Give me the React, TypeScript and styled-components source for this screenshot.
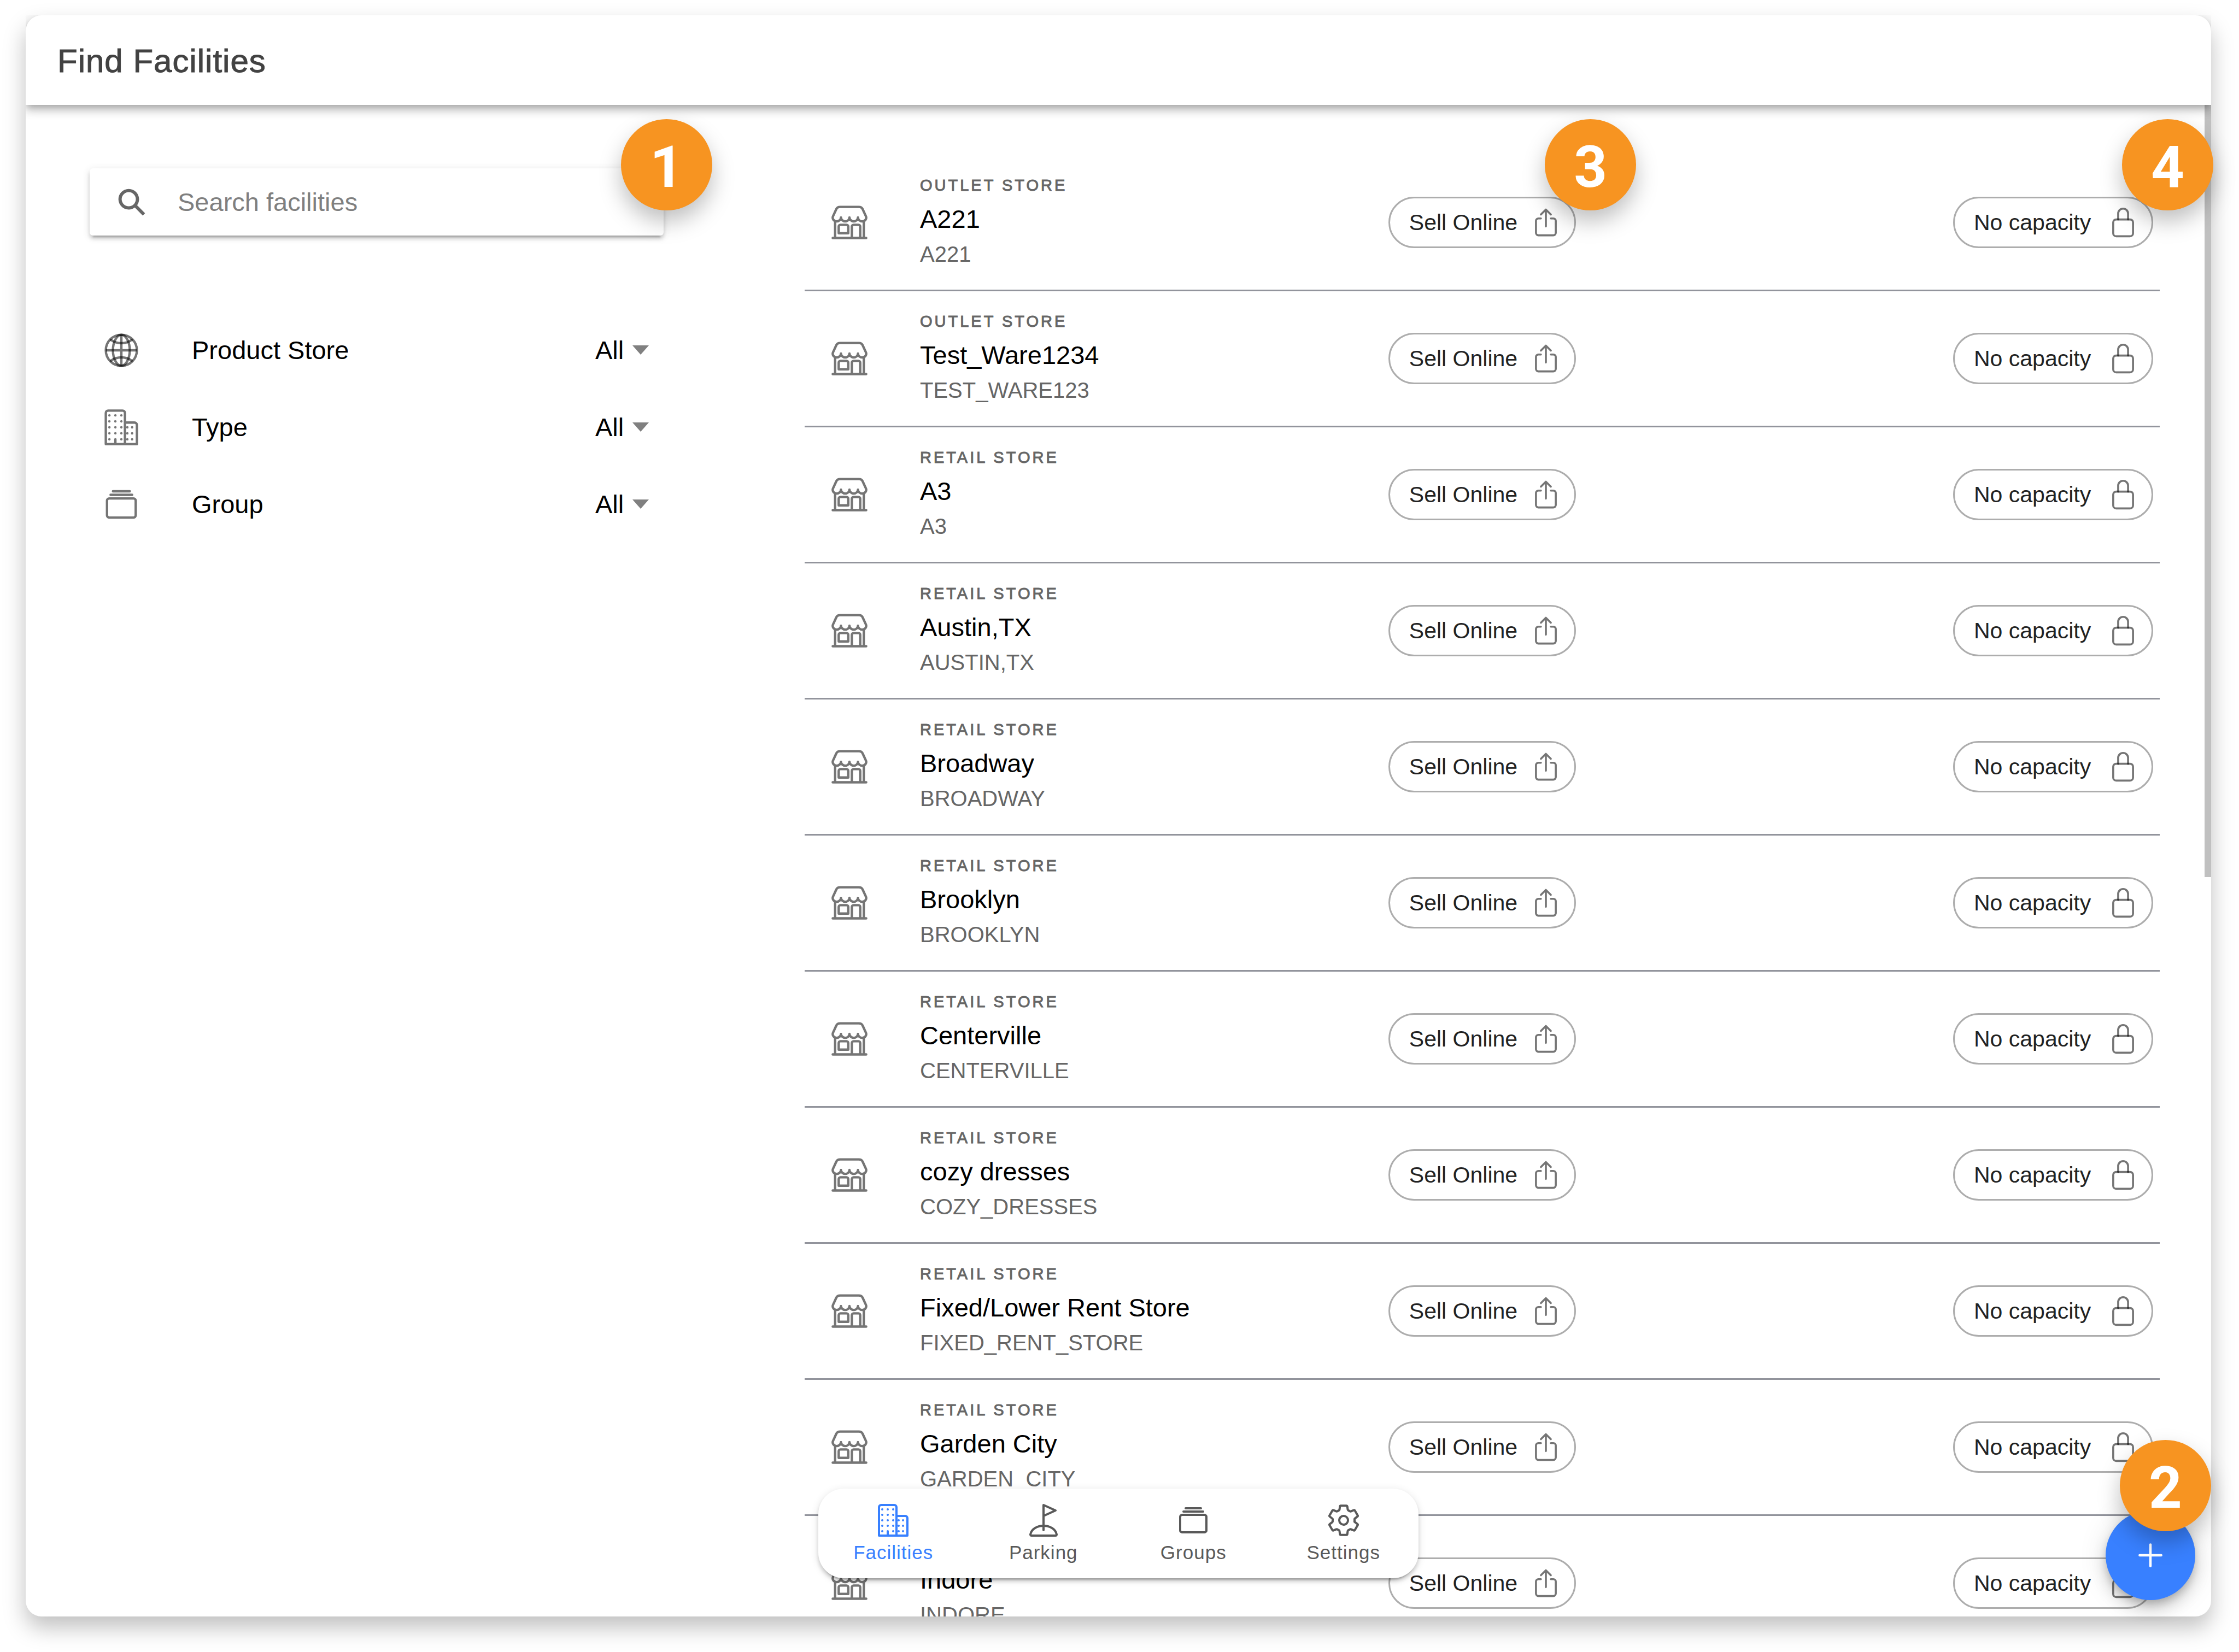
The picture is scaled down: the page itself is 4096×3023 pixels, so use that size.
import React from "react";
import styled, { createGlobalStyle } from "styled-components";
import {
  IoAdd,
  IoAlbumsOutline,
  IoBusinessOutline,
  IoGlobeOutline,
  IoGolfOutline,
  IoLockClosedOutline,
  IoSearchSharp,
  IoSettingsOutline,
  IoShareOutline,
  IoStorefrontOutline,
} from "react-icons/io5";

const colors = {
  primary: "#3880ff",
  accent: "#f79421",
  text: "#000",
  title: "#424242",
  muted: "#666",
  icon: "rgba(0, 0, 0, 0.54)",
  line: "#92949c",
};

const softShadow = "0 20px 40px rgba(0, 0, 0, 0.25)";
const raisedShadow =
  "0 6px 6px rgba(0, 0, 0, 0.14), 0 9px 3px -6px rgba(0, 0, 0, 0.2), 0 3px 15px rgba(0, 0, 0, 0.12)";

const GlobalStyle = createGlobalStyle`
  *, *::before, *::after { box-sizing: border-box; }
  body {
    margin: 0;
    background: #fff;
    color: ${colors.text};
    font-family: "Liberation Sans", Arial, Helvetica, sans-serif;
    font-size: 47px;
  }
  button, input, select { font: inherit; color: inherit; }
`;

const Page = styled.div`
  display: flex;
  height: 100vh;
  padding: 28px 51px 65px 47px;
`;

const Card = styled.div`
  position: relative;
  display: flex;
  flex: 1;
  flex-direction: column;
  min-width: 0;
  border-radius: 29px;
  background: #fff;
  box-shadow: ${softShadow};
`;

const Header = styled.header`
  position: relative;
  z-index: 1;
  display: flex;
  flex: none;
  align-items: center;
  height: 164px;
  padding: 4px 58px 0;
  border-radius: 29px 29px 0 0;
  background: #fff;
  box-shadow:
    0 6px 12px -3px rgba(0, 0, 0, 0.2),
    0 12px 15px rgba(0, 0, 0, 0.14),
    0 3px 29px rgba(0, 0, 0, 0.12);
  clip-path: inset(0 0 -60px 0);
`;

const Title = styled.h1`
  margin: 0;
  color: ${colors.title};
  font-size: 60px;
  font-weight: 400;
  line-height: 70px;
  letter-spacing: 1px;
  -webkit-text-stroke: 1px currentColor;
`;

const Content = styled.div`
  position: relative;
  display: flex;
  flex: 1;
  gap: 235px;
  min-height: 0;
  overflow: hidden;
  padding: 92px 94px 0;
  border-radius: 0 0 29px 29px;
`;

const Scrollbar = styled.div`
  position: absolute;
  top: 0;
  right: 0;
  width: 12px;
  height: 1413px;
  background: #c0c0c0;
`;

const Sidebar = styled.aside`
  flex: none;
  width: 1096px;
`;

const SearchBox = styled.label`
  position: relative;
  display: flex;
  align-items: center;
  gap: 54px;
  height: 123px;
  margin: 24px 23px 139px;
  padding: 0 47px;
  border-radius: 6px;
  background: #fff;
  box-shadow: ${raisedShadow};
`;

const SearchIcon = styled(IoSearchSharp)`
  flex: none;
  width: 60px;
  height: 60px;
  color: ${colors.muted};
`;

const SearchInput = styled.input`
  flex: 1;
  min-width: 0;
  padding: 0;
  border: 0;
  outline: 0;
  background: transparent;
  &::placeholder {
    color: #7f7f7f;
    opacity: 1;
  }
`;

const FilterRow = styled.div`
  display: flex;
  align-items: center;
  height: 141px;
  padding: 0 50px 0 46px;
`;

const ItemIcon = styled.span`
  display: flex;
  flex: none;
  margin-right: 94px;
  color: ${colors.icon};
  svg {
    width: 70px;
    height: 70px;
  }
`;

const FilterLabel = styled.label`
  flex: 1;
`;

const FilterSelect = styled.select`
  padding: 0;
  border: 0;
  outline: 0;
  background: transparent;
  appearance: none;
`;

const Caret = styled.span`
  width: 0;
  height: 0;
  margin-left: 15px;
  border: solid transparent;
  border-width: 17px 15px 0;
  border-top-color: #808080;
  pointer-events: none;
`;

const FacilityList = styled.ul`
  flex: 1;
  min-width: 0;
  margin: 0;
  padding: 0;
  list-style: none;
`;

const FacilityRow = styled.li`
  display: grid;
  grid-template-columns: repeat(3, 1fr);
  align-items: center;
  height: 249px;
  border-bottom: 3px solid ${colors.line};
`;

const FacilityInfo = styled.div`
  display: flex;
  align-items: center;
  padding-left: 47px;
`;

const FacilityText = styled.div`
  padding-bottom: 6px;
  white-space: nowrap;
`;

const Overline = styled.p`
  margin: 0;
  color: ${colors.muted};
  font-size: 29px;
  line-height: 58px;
  letter-spacing: 4px;
  -webkit-text-stroke: 1px currentColor;
`;

const Name = styled.h2`
  margin: 0;
  font-size: 47px;
  font-weight: 400;
  line-height: 65px;
`;

const Identifier = styled.p`
  margin: 0;
  color: ${colors.muted};
  font-size: 40px;
  line-height: 65px;
`;

const ChipSlot = styled.div<{ $align: "center" | "end" }>`
  position: relative;
  justify-self: ${(p) => p.$align};
  margin: 0 ${(p) => (p.$align === "end" ? "12px" : "0")};
`;

const Chip = styled.button<{ $minWidth?: number }>`
  display: flex;
  align-items: center;
  justify-content: space-between;
  gap: 23px;
  height: 94px;
  min-width: ${(p) => p.$minWidth ?? 0}px;
  padding: 0 23px 0 35px;
  border: 3px solid rgba(0, 0, 0, 0.32);
  border-radius: 47px;
  background: transparent;
  color: #222;
  font-size: 41px;
  white-space: nowrap;
  svg {
    width: 58px;
    height: 58px;
    color: ${colors.icon};
  }
`;

const TabBar = styled.nav`
  position: absolute;
  bottom: 70px;
  left: 0;
  right: 0;
  z-index: 1;
  display: grid;
  grid-template-columns: repeat(4, 1fr);
  width: 1098px;
  height: 164px;
  margin: 0 auto;
  border-radius: 47px;
  background: #fff;
  box-shadow: ${raisedShadow};
`;

const Tab = styled.a<{ $active: boolean }>`
  display: flex;
  flex-direction: column;
  align-items: center;
  justify-content: center;
  gap: 6px;
  color: ${(p) => (p.$active ? colors.primary : "#595959")};
  font-size: 35px;
  line-height: 42px;
  letter-spacing: 1px;
  text-decoration: none;
  svg {
    width: 64px;
    height: 64px;
  }
`;

const AddButton = styled.button`
  position: absolute;
  right: 29px;
  bottom: 30px;
  z-index: 1;
  display: grid;
  place-items: center;
  width: 164px;
  height: 164px;
  padding: 0;
  border: 0;
  border-radius: 50%;
  background: ${colors.primary};
  color: #fff;
  box-shadow:
    0 9px 15px -3px rgba(0, 0, 0, 0.2),
    0 18px 29px rgba(0, 0, 0, 0.14),
    0 3px 53px rgba(0, 0, 0, 0.12);
  svg {
    width: 70px;
    height: 70px;
  }
`;

const Marker = styled.span<{ $top?: number; $right: number; $bottom?: number }>`
  position: absolute;
  top: ${(p) => (p.$top === undefined ? "auto" : `${p.$top}px`)};
  right: ${(p) => p.$right}px;
  bottom: ${(p) => (p.$bottom === undefined ? "auto" : `${p.$bottom}px`)};
  z-index: 2;
  display: flex;
  align-items: center;
  justify-content: center;
  width: 167px;
  height: 167px;
  padding-top: 8px;
  border-radius: 50%;
  background: ${colors.accent};
  box-shadow: ${softShadow};
  color: #fff;
  font-family: Roboto, "Liberation Sans", sans-serif;
  font-size: 106px;
  font-weight: 700;
  line-height: 1;
`;

const filters = [
  { id: "product-store", label: "Product Store", Icon: IoGlobeOutline },
  { id: "type", label: "Type", Icon: IoBusinessOutline },
  { id: "group", label: "Group", Icon: IoAlbumsOutline },
];

const facilities = [
  { type: "OUTLET STORE", name: "A221", id: "A221" },
  { type: "OUTLET STORE", name: "Test_Ware1234", id: "TEST_WARE123" },
  { type: "RETAIL STORE", name: "A3", id: "A3" },
  { type: "RETAIL STORE", name: "Austin,TX", id: "AUSTIN,TX" },
  { type: "RETAIL STORE", name: "Broadway", id: "BROADWAY" },
  { type: "RETAIL STORE", name: "Brooklyn", id: "BROOKLYN" },
  { type: "RETAIL STORE", name: "Centerville", id: "CENTERVILLE" },
  { type: "RETAIL STORE", name: "cozy dresses", id: "COZY_DRESSES" },
  { type: "RETAIL STORE", name: "Fixed/Lower Rent Store", id: "FIXED_RENT_STORE" },
  { type: "RETAIL STORE", name: "Garden City", id: "GARDEN_CITY" },
  { type: "RETAIL STORE", name: "Indore", id: "INDORE" },
];

const tabs = [
  { label: "Facilities", Icon: IoBusinessOutline },
  { label: "Parking", Icon: IoGolfOutline },
  { label: "Groups", Icon: IoAlbumsOutline },
  { label: "Settings", Icon: IoSettingsOutline },
];

export default function App() {
  return (
    <>
      <GlobalStyle />
      <Page>
        <Card>
          <Header>
            <Title>Find Facilities</Title>
          </Header>
          <Content>
            <Sidebar>
              <SearchBox>
                <SearchIcon aria-hidden />
                <SearchInput type="text" placeholder="Search facilities" aria-label="Search facilities" />
                <Marker $top={-90} $right={-89}>1</Marker>
              </SearchBox>
              {filters.map(({ id, label, Icon }) => (
                <FilterRow key={id}>
                  <ItemIcon>
                    <Icon aria-hidden />
                  </ItemIcon>
                  <FilterLabel htmlFor={id}>{label}</FilterLabel>
                  <FilterSelect id={id}>
                    <option>All</option>
                  </FilterSelect>
                  <Caret />
                </FilterRow>
              ))}
            </Sidebar>
            <FacilityList>
              {facilities.map((facility, index) => (
                <FacilityRow key={facility.id}>
                  <FacilityInfo>
                    <ItemIcon>
                      <IoStorefrontOutline aria-hidden />
                    </ItemIcon>
                    <FacilityText>
                      <Overline>{facility.type}</Overline>
                      <Name>{facility.name}</Name>
                      <Identifier>{facility.id}</Identifier>
                    </FacilityText>
                  </FacilityInfo>
                  <ChipSlot $align="center">
                    <Chip type="button">
                      Sell Online
                      <IoShareOutline aria-hidden />
                    </Chip>
                    {index === 0 && <Marker $top={-142} $right={-110}>3</Marker>}
                  </ChipSlot>
                  <ChipSlot $align="end">
                    <Chip type="button" $minWidth={366}>
                      No capacity
                      <IoLockClosedOutline aria-hidden />
                    </Chip>
                  </ChipSlot>
                </FacilityRow>
              ))}
            </FacilityList>
            <Scrollbar />
          </Content>
          <TabBar>
            {tabs.map(({ label, Icon }, index) => (
              <Tab key={label} href="#" $active={index === 0}>
                <Icon aria-hidden />
                {label}
              </Tab>
            ))}
          </TabBar>
          <AddButton type="button" aria-label="Add facility">
            <IoAdd aria-hidden />
          </AddButton>
          <Marker $bottom={156} $right={0}>2</Marker>
          <Marker $top={190} $right={-4}>4</Marker>
        </Card>
      </Page>
    </>
  );
}
